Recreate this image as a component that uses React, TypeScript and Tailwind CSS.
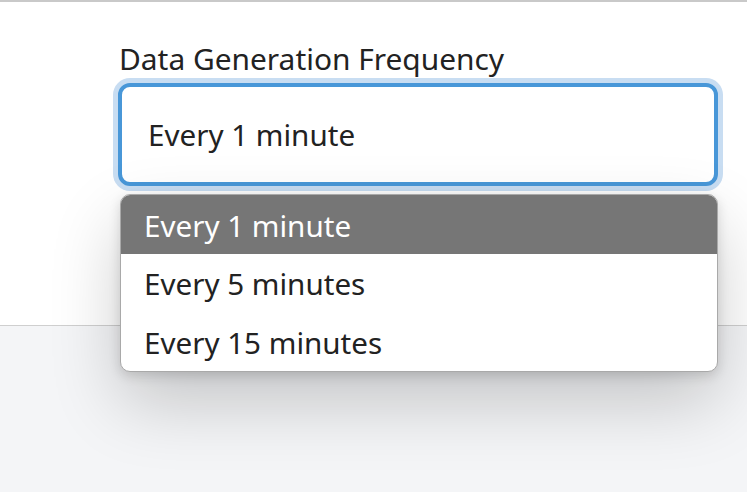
import React from "react";

export default function App() {
  const options = ["Every 1 minute", "Every 5 minutes", "Every 15 minutes"];
  return (
    <div
      className="h-[492px] w-[747px] overflow-hidden bg-[#f4f5f7] border-t-2 border-[#c9c9c9]"
      style={{ fontFamily: '"Noto Sans", "Open Sans", sans-serif' }}
    >
      <div className="h-[324px] bg-white border-b border-[#cfcfcf] pl-[118px] pt-[38px]">
        <div className="relative w-[600px]">
          <div className="text-[29.9px] leading-[38px] text-[#222] pl-[1px]">Data Generation Frequency</div>
          <div className="mt-[5px] h-[103px] rounded-[12px] border-[4px] border-[#4897d8] ring-[5px] ring-[#c8ddf2] bg-white flex items-center pl-[26px] pt-[2px] text-[29.6px] text-[#222]">
            Every 1 minute
          </div>
          <div className="absolute left-[2px] right-0 top-[154px] rounded-[10px] border border-[#a9a9a9] bg-white overflow-hidden shadow-[0_4px_12px_rgba(0,0,0,0.14),0_30px_70px_rgba(0,0,0,0.2)]">
            {options.map((o, i) => (
              <div
                key={o}
                className={
                  "h-[58.5px] flex items-center pl-[23px] pt-[3px] text-[29.6px] " +
                  (i === 0 ? "bg-[#767676] text-white" : "text-[#222]")
                }
              >
                {o}
              </div>
            ))}
          </div>
        </div>
      </div>
    </div>
  );
}
